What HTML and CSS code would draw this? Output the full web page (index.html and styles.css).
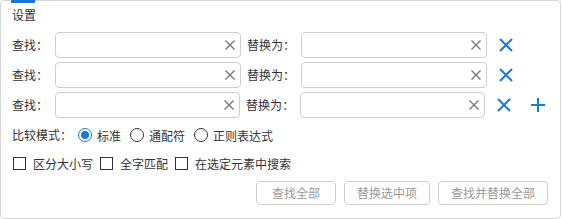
FILE: index.html
```html
<!DOCTYPE html>
<html lang="zh-CN">
<head>
<meta charset="utf-8">
<title>设置</title>
<link rel="stylesheet" href="styles.css">
</head>
<body>
<div class="panel">
  <span class="tab-mark"></span>
  <div class="title">设置</div>

  <div class="rows">
    <div class="row">
      <span class="lbl lbl-find">查找<span class="colon">：</span></span>
      <div class="field"><svg class="clear" viewBox="0 0 10 10"><path d="M0.5 0.5L9.5 9.5M9.5 0.5L0.5 9.5"/></svg></div>
      <span class="lbl lbl-rep">替换为<span class="colon">：</span></span>
      <div class="field"><svg class="clear" viewBox="0 0 10 10"><path d="M0.5 0.5L9.5 9.5M9.5 0.5L0.5 9.5"/></svg></div>
      <span class="icon-btn"><svg viewBox="0 0 14 14"><path d="M1 1L13 13M13 1L1 13"/></svg></span>
    </div>
    <div class="row">
      <span class="lbl lbl-find">查找<span class="colon">：</span></span>
      <div class="field"><svg class="clear" viewBox="0 0 10 10"><path d="M0.5 0.5L9.5 9.5M9.5 0.5L0.5 9.5"/></svg></div>
      <span class="lbl lbl-rep">替换为<span class="colon">：</span></span>
      <div class="field"><svg class="clear" viewBox="0 0 10 10"><path d="M0.5 0.5L9.5 9.5M9.5 0.5L0.5 9.5"/></svg></div>
      <span class="icon-btn"><svg viewBox="0 0 14 14"><path d="M1 1L13 13M13 1L1 13"/></svg></span>
    </div>
    <div class="row">
      <span class="lbl lbl-find">查找<span class="colon">：</span></span>
      <div class="field"><svg class="clear" viewBox="0 0 10 10"><path d="M0.5 0.5L9.5 9.5M9.5 0.5L0.5 9.5"/></svg></div>
      <span class="lbl lbl-rep">替换为<span class="colon">：</span></span>
      <div class="field"><svg class="clear" viewBox="0 0 10 10"><path d="M0.5 0.5L9.5 9.5M9.5 0.5L0.5 9.5"/></svg></div>
      <span class="icon-btn"><svg viewBox="0 0 14 14"><path d="M1 1L13 13M13 1L1 13"/></svg></span>
      <span class="icon-btn add"><svg viewBox="0 0 14 14"><path d="M7 0V14M0 7H14"/></svg></span>
    </div>
  </div>

  <div class="mode-row">
    <span class="lbl">比较模式<span class="colon">：</span></span>
    <span class="opt"><span class="radio checked"></span>标准</span>
    <span class="opt"><span class="radio"></span>通配符</span>
    <span class="opt"><span class="radio"></span>正则表达式</span>
  </div>

  <div class="check-row">
    <span class="opt"><span class="box"></span>区分大小写</span>
    <span class="opt"><span class="box"></span>全字匹配</span>
    <span class="opt"><span class="box"></span>在选定元素中搜索</span>
  </div>

  <div class="actions">
    <span class="btn">查找全部</span>
    <span class="btn">替换选中项</span>
    <span class="btn">查找并替换全部</span>
  </div>
</div>
</body>
</html>
```

FILE: styles.css
```css
* { box-sizing: border-box; }

body {
  margin: 0;
  font-family: "Noto Sans CJK SC", "Noto Sans", sans-serif;
  font-size: 12px;
  color: #333;
  background: #fff;
}

.panel {
  position: relative;
  width: 561px;
  height: 219px;
  border: 1px solid #d6d6d6;
  border-radius: 4px;
  padding: 5px 12px 0 11px;
  display: flex;
  flex-direction: column;
}

.tab-mark {
  position: absolute;
  top: -1px;
  left: 10px;
  width: 24px;
  height: 3px;
  background: #1a73d9;
}

.title {
  height: 18px;
  line-height: 18px;
}

.rows {
  margin-top: 8px;
  display: flex;
  flex-direction: column;
  gap: 4px;
}

.row {
  display: flex;
  align-items: center;
  height: 26px;
}

.lbl {
  white-space: nowrap;
  line-height: 18px;
}

.colon {
  font-family: "Noto Sans CJK TC", "Noto Sans CJK SC", sans-serif;
}

.lbl-find { margin-right: 7px; }
.lbl-rep { margin-left: 6px; margin-right: 6px; }

.field {
  width: 186px;
  height: 26px;
  border: 1px solid #cfcfcf;
  border-radius: 4px;
  display: flex;
  align-items: center;
  justify-content: flex-end;
  padding-right: 5px;
}

.clear {
  width: 10px;
  height: 10px;
  fill: none;
  stroke: #777;
  stroke-width: 1.4;
}

.icon-btn {
  width: 20px;
  height: 20px;
  margin-left: 9px;
  display: flex;
  align-items: center;
  justify-content: center;
}

.icon-btn svg {
  width: 14px;
  height: 14px;
  fill: none;
  stroke: #1f78d1;
  stroke-width: 2;
}

.icon-btn.add { margin-left: 14px; }

.mode-row {
  margin-top: 7px;
  height: 20px;
  display: flex;
  align-items: center;
}

.mode-row .lbl { margin-right: 6px; }

.opt {
  display: flex;
  align-items: center;
  white-space: nowrap;
}

.mode-row .opt { margin-right: 9px; }

.radio {
  width: 14px;
  height: 14px;
  border: 1px solid #333;
  border-radius: 50%;
  margin-right: 5px;
  display: flex;
  align-items: center;
  justify-content: center;
}

.radio.checked { border-color: #1f78d1; }

.radio.checked::after {
  content: "";
  width: 8px;
  height: 8px;
  border-radius: 50%;
  background: #1f78d1;
}

.check-row {
  margin-top: 8px;
  height: 20px;
  display: flex;
  align-items: center;
  gap: 7px;
  padding-left: 1px;
}

.box {
  width: 13px;
  height: 13px;
  border: 1px solid #333;
  margin-right: 7px;
}

.actions {
  margin-top: 8px;
  display: flex;
  justify-content: flex-end;
  gap: 8px;
}

.btn {
  min-width: 80px;
  height: 24px;
  line-height: 22px;
  padding: 0 12px;
  border: 1px solid #cfcfcf;
  border-radius: 4px;
  color: #999;
  text-align: center;
  white-space: nowrap;
}
```
